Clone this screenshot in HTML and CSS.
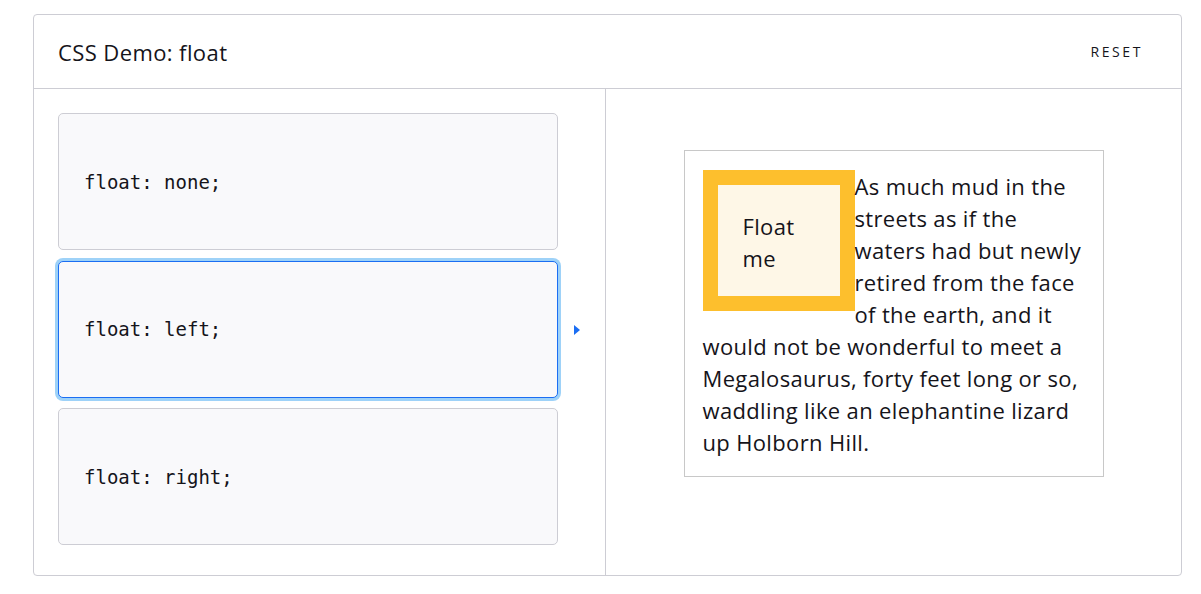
FILE: index.html
```html
<!DOCTYPE html>
<html>
<head>
<meta charset="utf-8">
<link rel="stylesheet" href="styles.css">
</head>
<body>
<div class="demo">
  <header class="demo-header">
    <h1 class="demo-title">CSS Demo: float</h1>
    <button class="reset">RESET</button>
  </header>
  <div class="demo-body">
    <div class="choices">
      <div class="choice"><code>float: none;</code></div>
      <div class="choice selected"><code>float: left;</code>
        <svg class="arrow" width="8" height="12" viewBox="0 0 8 12"><path d="M1 1 L7 6 L1 11 Z" fill="#1b6ef3"/></svg>
      </div>
      <div class="choice"><code>float: right;</code></div>
    </div>
    <div class="output">
      <section class="example">
        <div class="float-box">Float me</div>
        <p class="story">As much mud in the<br>streets as if the<br>waters had but newly<br>retired from the face<br>of the earth, and it<br>would not be wonderful to meet a<br>Megalosaurus, forty feet long or so,<br>waddling like an elephantine lizard<br>up Holborn Hill.</p>
      </section>
    </div>
  </div>
</div>
</body>
</html>
```

FILE: styles.css
```css
* { box-sizing: border-box; }
html, body { margin: 0; padding: 0; background: #fff; }
body {
  padding: 14px 19px 18px 33px;
  font-family: "Open Sans", "Noto Sans", sans-serif;
  color: #15141a;
}
.demo {
  border: 1px solid #cdcdd4;
  border-radius: 4px;
  height: 562px;
  display: flex;
  flex-direction: column;
}
.demo-header {
  height: 74px;
  border-bottom: 1px solid #cdcdd4;
  display: flex;
  align-items: center;
  justify-content: space-between;
  padding: 0 24px 0 24px;
}
.demo-title {
  margin: 0;
  font-size: 22px;
  letter-spacing: 0.4px;
  font-weight: 400;
}
.reset {
  border: 0;
  background: none;
  font-family: "Open Sans", sans-serif;
  font-size: 14px;
  letter-spacing: 2.6px;
  color: #15141a;
  padding: 8px 14px 8px 12px;
}
.demo-body {
  flex: 1;
  display: grid;
  grid-template-columns: 572px 1fr;
}
.choices {
  border-right: 1px solid #cdcdd4;
  padding: 24px 0 0 24px;
  display: flex;
  flex-direction: column;
  gap: 10.5px;
}
.choice {
  position: relative;
  width: 500px;
  height: 137px;
  background: #f9f9fb;
  border: 1px solid #cdcdd4;
  border-radius: 5px;
  display: flex;
  align-items: center;
  padding-left: 25px;
}
.choice code {
  font-family: "DejaVu Sans Mono", monospace;
  font-size: 19px;
  color: #15141a;
}
.choice.selected {
  border: 1px solid #1b6ef3;
  box-shadow: 0 0 0 3px #9ed2f8;
}
.arrow {
  position: absolute;
  left: 514px;
  top: 62px;
}
.output {
  display: flex;
  justify-content: center;
  align-items: flex-start;
  padding-top: 61px;
}
.example {
  width: 420px;
  border: 1px solid #c8c8c8;
  padding: 19px 4px 18px 18px;
  font-size: 22px;
  letter-spacing: 0.35px;
  line-height: 32px;
}
.story {
  margin: 0;
}
.float-box {
  float: left;
  width: 152px;
  height: 141px;
  border: 15px solid #fdbf2d;
  background: #fef7e7;
  padding: 25px 20px 0 25px;
}
```
